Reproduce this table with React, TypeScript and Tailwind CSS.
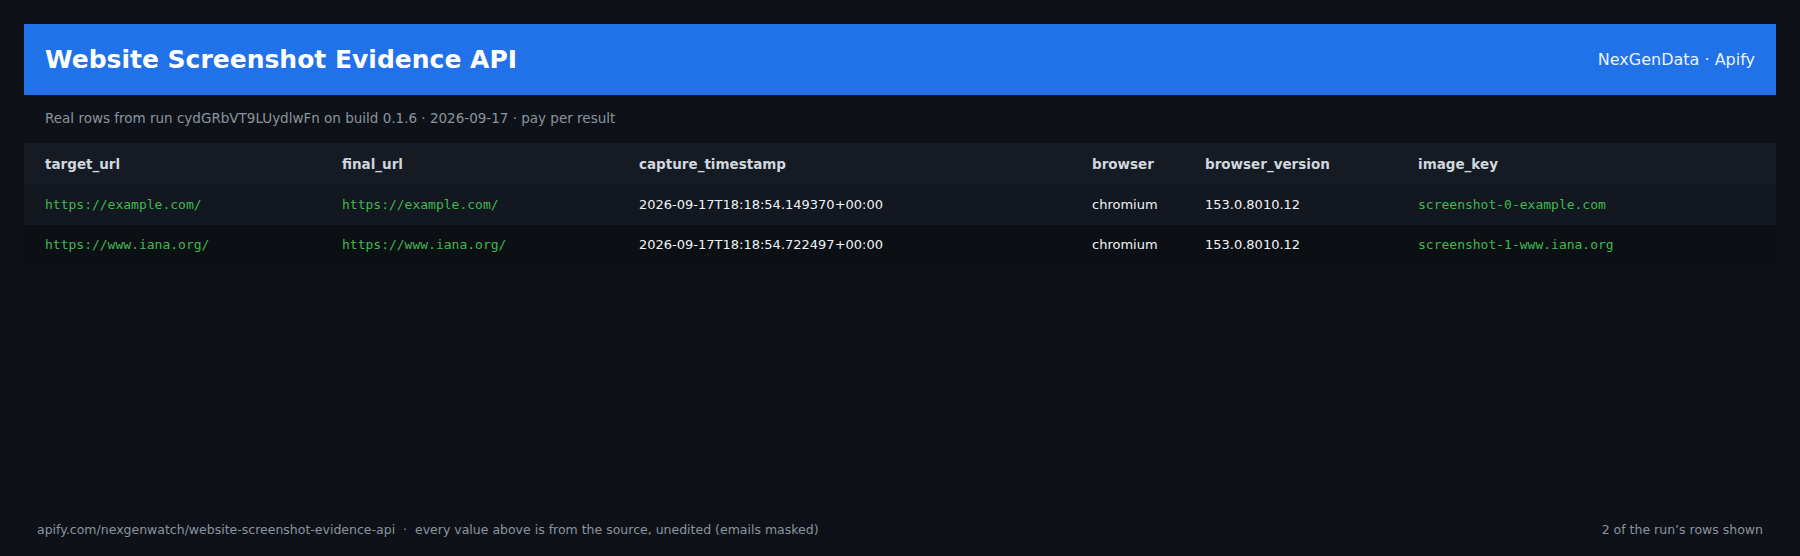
import React from "react";

const rows = [
  {
    target: "https://example.com/",
    final: "https://example.com/",
    ts: "2026-09-17T18:18:54.149370+00:00",
    browser: "chromium",
    version: "153.0.8010.12",
    key: "screenshot-0-example.com",
  },
  {
    target: "https://www.iana.org/",
    final: "https://www.iana.org/",
    ts: "2026-09-17T18:18:54.722497+00:00",
    browser: "chromium",
    version: "153.0.8010.12",
    key: "screenshot-1-www.iana.org",
  },
];

const cols = [
  { name: "target_url", w: "w-[297px]" },
  { name: "final_url", w: "w-[297px]" },
  { name: "capture_timestamp", w: "w-[453px]" },
  { name: "browser", w: "w-[113px]" },
  { name: "browser_version", w: "w-[213px]" },
  { name: "image_key", w: "" },
];

const App = () => {
  return (
    <div className="flex h-[556px] flex-col bg-[#0e1218] px-6 pt-6 font-['DejaVu_Sans',sans-serif] text-[#e6edf3]">
      <header className="flex h-[71px] items-center justify-between bg-[#2171e9] px-[21px]">
        <h1 className="text-[25px] font-bold text-white">Website Screenshot Evidence API</h1>
        <span className="text-[16px] text-[#eaf2ff]">NexGenData · Apify</span>
      </header>

      <p className="mt-[13px] px-[21px] text-[13.5px] text-[#8b949e]">
        Real rows from run cydGRbVT9LUydlwFn on build 0.1.6 · 2026-09-17 · pay per result
      </p>

      <table className="mt-[15px] w-full table-fixed border-collapse text-left">
        <thead>
          <tr className="h-[41px] bg-[#161b23]">
            {cols.map((c) => (
              <th key={c.name} className={`${c.w} pl-[21px] text-[13.5px] font-bold text-[#d0d7de]`}>
                {c.name}
              </th>
            ))}
          </tr>
        </thead>
        <tbody>
          {rows.map((r, i) => (
            <tr key={r.key} className={i === 0 ? "h-[41px] bg-[#121720]" : "h-[39px] bg-[#0c1015]"}>
              <td className="pl-[21px] font-['DejaVu_Sans_Mono',monospace] text-[13px] text-[#3fb950]">{r.target}</td>
              <td className="pl-[21px] font-['DejaVu_Sans_Mono',monospace] text-[13px] text-[#3fb950]">{r.final}</td>
              <td className="pl-[21px] text-[13px] text-[#f0f3f6]">{r.ts}</td>
              <td className="pl-[21px] text-[13px] text-[#f0f3f6]">{r.browser}</td>
              <td className="pl-[21px] text-[13px] text-[#f0f3f6]">{r.version}</td>
              <td className="pl-[21px] font-['DejaVu_Sans_Mono',monospace] text-[13px] text-[#3fb950]">{r.key}</td>
            </tr>
          ))}
        </tbody>
      </table>

      <footer className="mt-auto flex items-center justify-between px-[13px] pb-[16px] text-[12.5px] text-[#8b949e]">
        <span>apify.com/nexgenwatch/website-screenshot-evidence-api &nbsp;·&nbsp; every value above is from the source, unedited (emails masked)</span>
        <span>2 of the run’s rows shown</span>
      </footer>
    </div>
  );
};

export default App;
